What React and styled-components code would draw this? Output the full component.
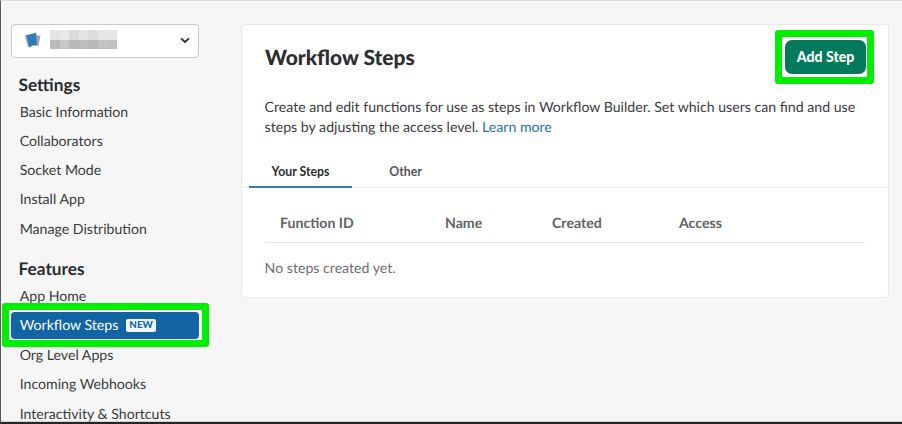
import React from 'react';
import styled, { createGlobalStyle } from 'styled-components';

const GlobalStyle = createGlobalStyle`
  *, *::before, *::after { box-sizing: border-box; }
  body { margin: 0; background: #f6f6f6; overflow: hidden; }
`;

const Window = styled.div`
  display: flex;
  align-items: flex-start;
  width: 902px;
  height: 424px;
  padding: 22.5px 0 0 10px;
  overflow: hidden;
  border-top: 1px solid #dcdcdc;
  border-left: 1px solid #5a5a5c;
  border-bottom: 2px solid #252427;
  box-shadow: inset 0 -1px #cfcfcf;
  background: #f6f6f6;
  color: #2c2d30;
  font-family: Lato, sans-serif;
  font-size: 14.13px;
  text-rendering: geometricPrecision;
`;

const Sidebar = styled.nav`
  flex: none;
  width: 230px;
`;

const AppSelect = styled.button`
  display: flex;
  align-items: center;
  width: 188px;
  height: 34px;
  padding: 0 8px 0 12px;
  border: 1px solid #c6cacb;
  border-radius: 4px;
  background: #fff;
`;

const MaskedName = styled.span`
  display: grid;
  grid-template-columns: repeat(7, 1fr);
  grid-template-rows: 10px 9px;
  width: 67px;
  margin: -2px auto 0 9px;
`;

const MaskCell = styled.span`
  background: ${(p) => p.$tone};
`;

const Heading = styled.h2`
  margin: ${(p) => p.$top}px 0 0 7.5px;
  font-size: 17.3px;
  line-height: 26px;
  font-weight: 700;
`;

const NavList = styled.ul`
  margin: 1px 0 0;
  padding: 0;
  list-style: none;
`;

const NavItem = styled.li`
  position: relative;
  display: flex;
  align-items: center;
  width: 188px;
  height: 27px;
  margin-bottom: ${(p) => (p.$active ? 3 : 2.3)}px;
  padding-left: 8.7px;
  border-radius: 4px;
  white-space: nowrap;
  background: ${(p) => (p.$active ? '#1264a3' : 'transparent')};
  color: ${(p) => (p.$active ? '#fff' : '#3a3b3d')};
`;

const NewBadge = styled.span`
  height: 13px;
  margin-left: 8px;
  padding: 0 3px;
  border-radius: 2px;
  background: #f1f7fa;
  color: #1264a3;
  font-size: 9.8px;
  line-height: 13px;
  font-weight: 900;
`;

const Highlight = styled.span`
  position: absolute;
  inset: ${(p) => p.$inset};
  border: 7px solid #00ef00;
  border-radius: 3px;
  box-shadow: inset 0 0 0 1px #fff;
  pointer-events: none;
`;

const Card = styled.main`
  flex: none;
  width: 648px;
  height: 274.5px;
  border: 1px solid #e8e8e8;
  border-radius: 4px;
  background: #fff;
`;

const CardHeader = styled.header`
  display: flex;
  align-items: center;
  justify-content: space-between;
  height: 65px;
  padding: 0 22px 0 23px;
`;

const Title = styled.h1`
  margin: 1px 0 0;
  font-size: 20.9px;
  line-height: 28px;
  font-weight: 900;
`;

const AddButton = styled.button`
  position: relative;
  width: 81px;
  height: 34px;
  padding: 0;
  border: 0;
  border-radius: 7px;
  background: #007a5a;
  color: #fff;
  font: 900 14.1px/34px Lato, sans-serif;
`;

const Description = styled.p`
  width: 600px;
  margin: 8px 0 0 22.6px;
  line-height: 20px;
  color: #3a3b3d;
`;

const Link = styled.a`
  color: #1f73a6;
  text-decoration: none;
`;

const Tabs = styled.div`
  display: flex;
  gap: 2px;
  height: 32px;
  margin-top: 18px;
  padding-left: 7px;
  border-bottom: 1px solid #ededed;
`;

const Tab = styled.button`
  width: 103px;
  height: 32px;
  padding: 1px 0 0;
  border: 0;
  border-bottom: 2px solid ${(p) => (p.$active ? '#2f7fb8' : 'transparent')};
  background: none;
  color: ${(p) => (p.$active ? '#2c2d30' : '#555658')};
  font: 700 12.3px/29px Lato, sans-serif;
`;

const TableHead = styled.div`
  display: grid;
  grid-template-columns: 165px 107px 127px 1fr;
  align-content: start;
  height: 55px;
  margin: 0 23px 0 23px;
  padding: 27.5px 0 0 15px;
  border-bottom: 1px solid #e8e8e8;
  color: #616264;
  font-weight: 700;
  line-height: 18px;
`;

const EmptyMessage = styled.p`
  margin: 17.5px 0 0 22.6px;
  line-height: 18px;
  color: #6d6e70;
`;

const maskTones = [
  '#e3e4e4', '#e9e9e9', '#dadcdc', '#e4e4e4', '#dcdddd', '#e4e5e5', '#e6e6e6',
  '#b9bbbb', '#c5c6c6', '#b8baba', '#bcbebe', '#b7b9b9', '#c2c3c3', '#bfc0c0',
];
const settings = ['Basic Information', 'Collaborators', 'Socket Mode', 'Install App', 'Manage Distribution'];
const features = ['App Home', 'Workflow Steps', 'Org Level Apps', 'Incoming Webhooks', 'Interactivity & Shortcuts'];
const columns = ['Function ID', 'Name', 'Created', 'Access'];

const AppIcon = () => (
  <svg width="17" height="17" viewBox="0 0 17 17">
    <path d="M9 3 16.5 3.5 14.5 14 9 13.5Z" fill="#a5a8aa" />
    <path d="M.5 4 3.5 2.5 5 15 3 13.5Z" fill="#c9cccd" />
    <path d="M2 3.2 12 .8 13 12.5Q9 13 5 15.5Z" fill="#357ab5" />
  </svg>
);

const Chevron = () => (
  <svg width="10" height="7" viewBox="0 0 10 7" fill="none">
    <path d="m1 1.3 4 3.7 4-3.7" stroke="#2c2d30" strokeWidth="1.8" />
  </svg>
);

export default function App() {
  return (
    <>
      <GlobalStyle />
      <Window>
        <Sidebar>
          <AppSelect>
            <AppIcon />
            <MaskedName>
              {maskTones.map((tone, i) => <MaskCell key={i} $tone={tone} />)}
            </MaskedName>
            <Chevron />
          </AppSelect>
          <Heading $top={14}>Settings</Heading>
          <NavList>
            {settings.map((label) => <NavItem key={label}>{label}</NavItem>)}
          </NavList>
          <Heading $top={13}>Features</Heading>
          <NavList>
            {features.map((label) => {
              const active = label === 'Workflow Steps';
              return (
                <NavItem key={label} $active={active}>
                  {label}
                  {active && <NewBadge>NEW</NewBadge>}
                  {active && <Highlight $inset="-9px -10px -8px -9px" />}
                </NavItem>
              );
            })}
          </NavList>
        </Sidebar>
        <Card>
          <CardHeader>
            <Title>Workflow Steps</Title>
            <AddButton>
              Add Step
              <Highlight $inset="-10px -8px -10px -10px" />
            </AddButton>
          </CardHeader>
          <Description>
            Create and edit functions for use as steps in Workflow Builder. Set which users can find and use steps by
            adjusting the access level. <Link>Learn more</Link>
          </Description>
          <Tabs>
            <Tab $active>Your Steps</Tab>
            <Tab>Other</Tab>
          </Tabs>
          <TableHead>
            {columns.map((name) => <span key={name}>{name}</span>)}
          </TableHead>
          <EmptyMessage>No steps created yet.</EmptyMessage>
        </Card>
      </Window>
    </>
  );
}
